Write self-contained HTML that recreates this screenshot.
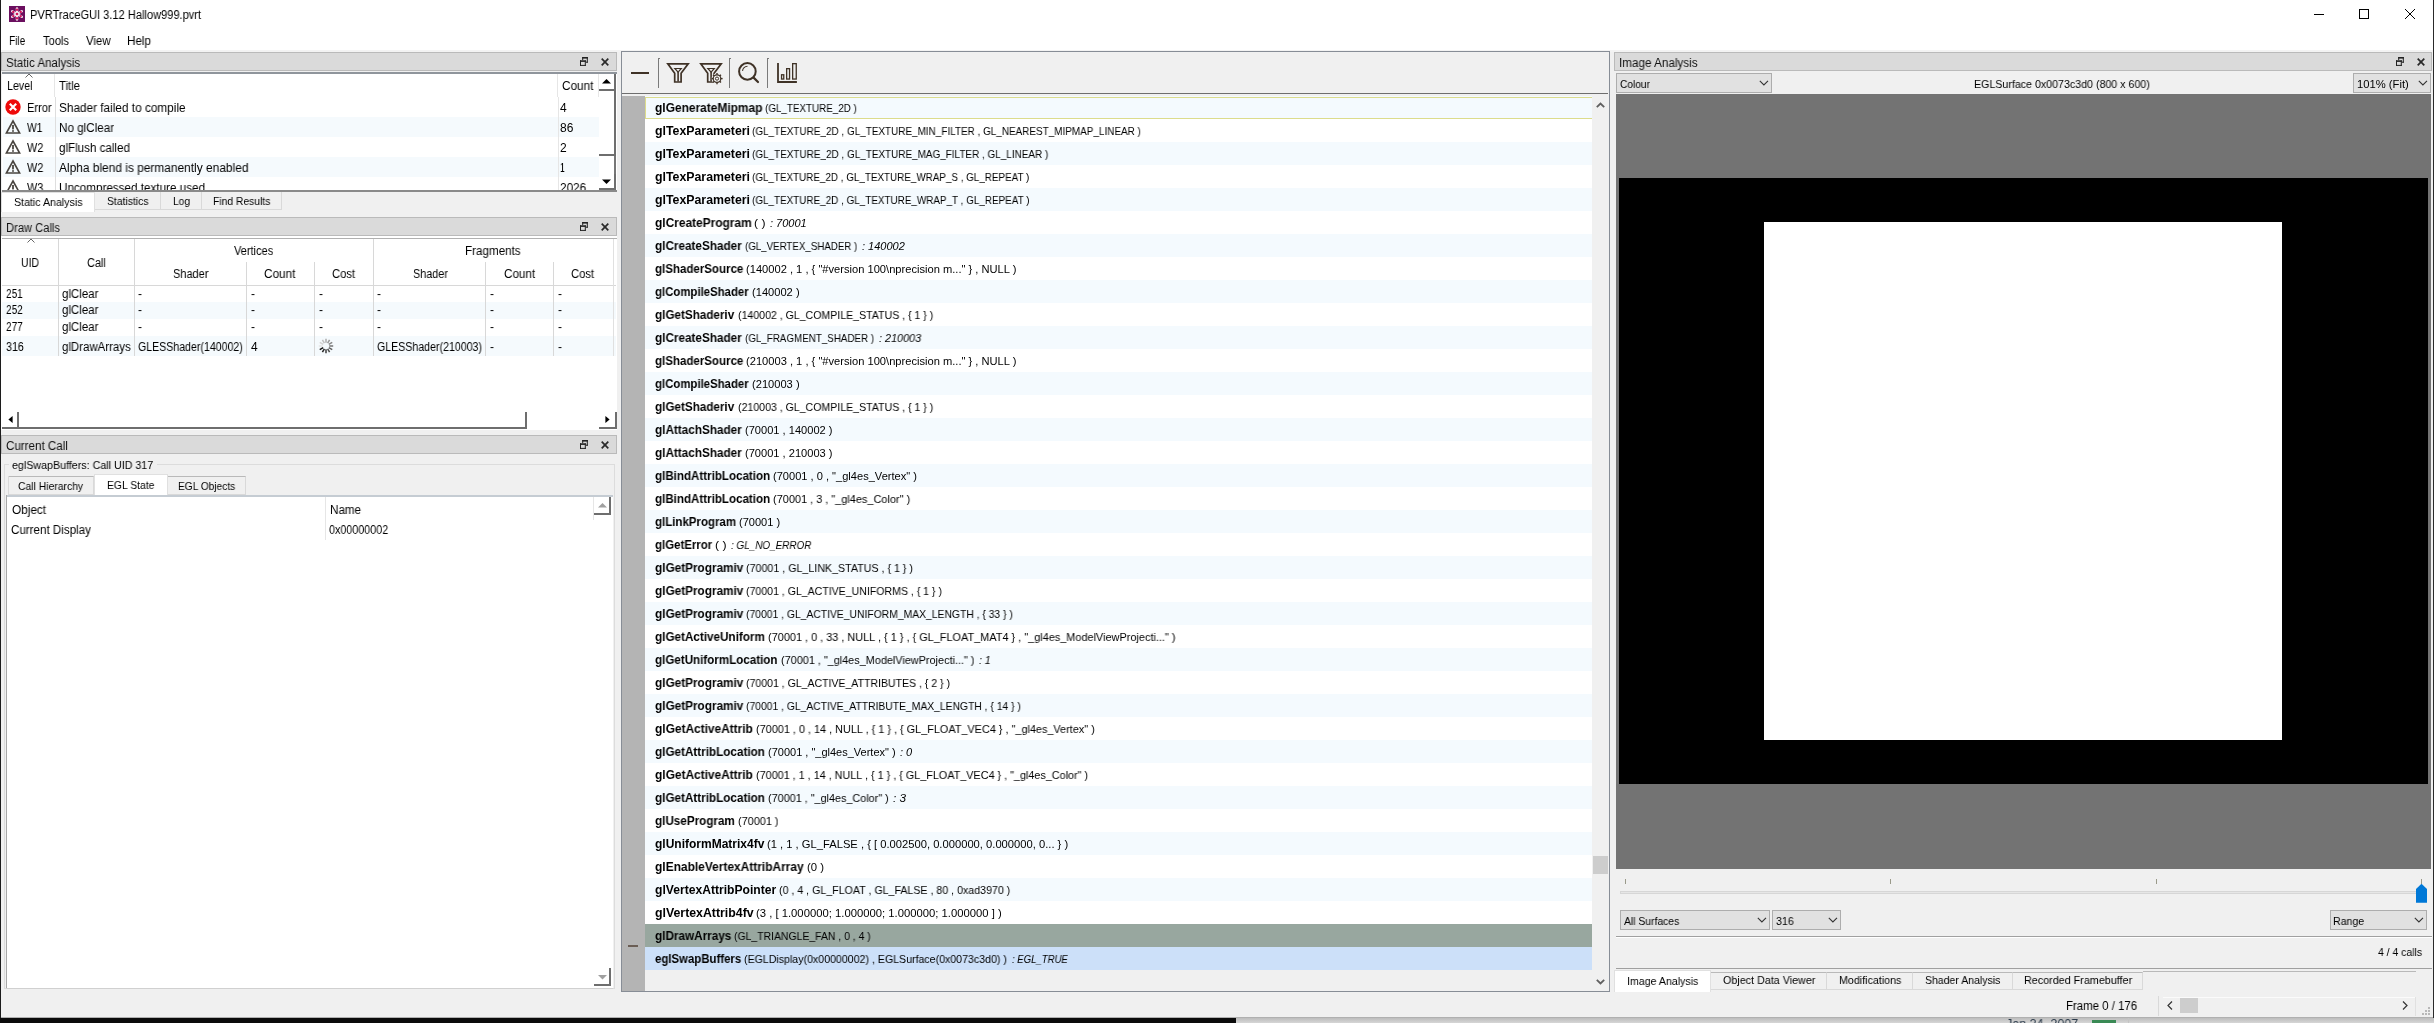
<!DOCTYPE html><html><head><meta charset="utf-8"><style>html,body{margin:0;padding:0;width:2434px;height:1023px;overflow:hidden;background:#f0f0f0}.a{position:absolute}.t{position:absolute;white-space:nowrap;line-height:1;font-family:"Liberation Sans",sans-serif;transform-origin:0 0;will-change:transform}</style></head><body>
<div class="a" style="left:0px;top:0px;width:2434px;height:1023px;background:#f0f0f0"></div>
<div class="a" style="left:1px;top:0px;width:2432px;height:50px;background:#fff"></div>
<div class="a" style="left:1px;top:50px;width:2432px;height:2px;background:#f3f3f3"></div>
<div class="a" style="left:0px;top:0px;width:1px;height:1018px;background:#1c1c1c"></div>
<div class="a" style="left:2433px;top:0px;width:1px;height:1018px;background:#2a2a2a"></div>
<div class="a" style="left:0px;top:1018px;width:1236px;height:5px;background:#0b0b0b"></div>
<div class="a" style="left:1236px;top:1018px;width:1198px;height:5px;background:linear-gradient(#bdbdbd,#d6d6d6)"></div>
<div class="a" style="left:0;top:0;width:2434px;height:1023px;clip-path:inset(1018px 0px 0px 1236px)">
<div class="t" style="left:2006.00px;top:1016.50px;font-size:13px;color:#2b3a4a;transform:scaleX(0.9600);">Jan 24, 2007</div>
<div class="a" style="left:2092px;top:1020px;width:24px;height:3px;background:#3a8a55"></div>
<div class="a" style="left:2128px;top:1018px;width:1px;height:5px;background:#c4c4c4"></div>
</div>
<svg class="a" style="left:9px;top:6px" width="16" height="16" viewBox="0 0 16 16"><rect width="16" height="16" fill="#6b0f5f"/><g stroke="#f3e8f0" stroke-width="2.4" stroke-linecap="round"><line x1="8" y1="2.5" x2="8" y2="13.5"/><line x1="3.2" y1="5.2" x2="12.8" y2="10.8"/><line x1="3.2" y1="10.8" x2="12.8" y2="5.2"/></g><g fill="#d4145a"><circle cx="8" cy="3.8" r="1.2"/><circle cx="8" cy="12.2" r="1.2"/><circle cx="4.3" cy="5.9" r="1.2"/><circle cx="11.7" cy="10.1" r="1.2"/><circle cx="4.3" cy="10.1" r="1.2"/><circle cx="11.7" cy="5.9" r="1.2"/><circle cx="8" cy="8" r="1.3"/></g></svg>
<div class="t" style="left:30.30px;top:8.84px;font-size:12px;color:#000;transform:scaleX(0.9226);">PVRTraceGUI 3.12 Hallow999.pvrt</div>
<div class="a" style="left:2314px;top:14px;width:10px;height:1px;background:#000"></div>
<div class="a" style="left:2359px;top:9px;width:10px;height:10px;border:1px solid #000;box-sizing:border-box"></div>
<svg class="a" style="left:2404px;top:8px" width="12" height="12" viewBox="0 0 12 12"><path d="M1 1L11 11M11 1L1 11" stroke="#000" stroke-width="1"/></svg>
<div class="t" style="left:9.40px;top:34.84px;font-size:12px;color:#000;transform:scaleX(0.8400);">File</div>
<div class="t" style="left:43.30px;top:34.84px;font-size:12px;color:#000;transform:scaleX(0.9286);">Tools</div>
<div class="t" style="left:86.10px;top:34.84px;font-size:12px;color:#000;transform:scaleX(0.9500);">View</div>
<div class="t" style="left:127.40px;top:34.84px;font-size:12px;color:#000;transform:scaleX(0.9680);">Help</div>
<div class="a" style="left:1px;top:52px;width:616px;height:19px;background:#dadada;border:1px solid #bababa;box-sizing:border-box"></div>
<div class="t" style="left:6.00px;top:56.84px;font-size:12px;color:#111;transform:scaleX(0.9597);">Static Analysis</div>
<svg class="a" style="left:580px;top:57px" width="9" height="9" viewBox="0 0 9 9"><g fill="#222"><rect x="2.2" y="0" width="5.6" height="1.6"/><rect x="6.8" y="0" width="1" height="5.7"/><rect x="2.2" y="0" width="1" height="3.3"/><rect x="5.8" y="4.7" width="2" height="1"/><rect x="0" y="3.3" width="5.8" height="1.6"/><rect x="0" y="3.3" width="1" height="5.6"/><rect x="4.8" y="3.3" width="1" height="5.6"/><rect x="0" y="7.9" width="5.8" height="1"/></g></svg>
<svg class="a" style="left:601px;top:58px" width="8" height="8" viewBox="0 0 8 8"><path d="M0.7 0.7L7.3 7.3M7.3 0.7L0.7 7.3" stroke="#2a2a2a" stroke-width="1.7"/></svg>
<div class="a" style="left:1px;top:217px;width:616px;height:19px;background:#dadada;border:1px solid #bababa;box-sizing:border-box"></div>
<div class="t" style="left:6.00px;top:221.84px;font-size:12px;color:#111;transform:scaleX(0.9310);">Draw Calls</div>
<svg class="a" style="left:580px;top:222px" width="9" height="9" viewBox="0 0 9 9"><g fill="#222"><rect x="2.2" y="0" width="5.6" height="1.6"/><rect x="6.8" y="0" width="1" height="5.7"/><rect x="2.2" y="0" width="1" height="3.3"/><rect x="5.8" y="4.7" width="2" height="1"/><rect x="0" y="3.3" width="5.8" height="1.6"/><rect x="0" y="3.3" width="1" height="5.6"/><rect x="4.8" y="3.3" width="1" height="5.6"/><rect x="0" y="7.9" width="5.8" height="1"/></g></svg>
<svg class="a" style="left:601px;top:223px" width="8" height="8" viewBox="0 0 8 8"><path d="M0.7 0.7L7.3 7.3M7.3 0.7L0.7 7.3" stroke="#2a2a2a" stroke-width="1.7"/></svg>
<div class="a" style="left:1px;top:435px;width:616px;height:19px;background:#dadada;border:1px solid #bababa;box-sizing:border-box"></div>
<div class="t" style="left:6.00px;top:439.84px;font-size:12px;color:#111;transform:scaleX(0.9672);">Current Call</div>
<svg class="a" style="left:580px;top:440px" width="9" height="9" viewBox="0 0 9 9"><g fill="#222"><rect x="2.2" y="0" width="5.6" height="1.6"/><rect x="6.8" y="0" width="1" height="5.7"/><rect x="2.2" y="0" width="1" height="3.3"/><rect x="5.8" y="4.7" width="2" height="1"/><rect x="0" y="3.3" width="5.8" height="1.6"/><rect x="0" y="3.3" width="1" height="5.6"/><rect x="4.8" y="3.3" width="1" height="5.6"/><rect x="0" y="7.9" width="5.8" height="1"/></g></svg>
<svg class="a" style="left:601px;top:441px" width="8" height="8" viewBox="0 0 8 8"><path d="M0.7 0.7L7.3 7.3M7.3 0.7L0.7 7.3" stroke="#2a2a2a" stroke-width="1.7"/></svg>
<div class="a" style="left:1614px;top:52px;width:818px;height:19px;background:#dadada;border:1px solid #bababa;box-sizing:border-box"></div>
<div class="t" style="left:1619.00px;top:56.84px;font-size:12px;color:#111;transform:scaleX(0.9741);">Image Analysis</div>
<svg class="a" style="left:2396px;top:57px" width="9" height="9" viewBox="0 0 9 9"><g fill="#222"><rect x="2.2" y="0" width="5.6" height="1.6"/><rect x="6.8" y="0" width="1" height="5.7"/><rect x="2.2" y="0" width="1" height="3.3"/><rect x="5.8" y="4.7" width="2" height="1"/><rect x="0" y="3.3" width="5.8" height="1.6"/><rect x="0" y="3.3" width="1" height="5.6"/><rect x="4.8" y="3.3" width="1" height="5.6"/><rect x="0" y="7.9" width="5.8" height="1"/></g></svg>
<svg class="a" style="left:2417px;top:58px" width="8" height="8" viewBox="0 0 8 8"><path d="M0.7 0.7L7.3 7.3M7.3 0.7L0.7 7.3" stroke="#2a2a2a" stroke-width="1.7"/></svg>
<div class="a" style="left:2px;top:72px;width:615px;height:120px;background:#fff"></div>
<div class="a" style="left:2px;top:72px;width:615px;height:2px;background:#8f959c"></div>
<div class="a" style="left:2px;top:190px;width:615px;height:2px;background:#8a8a8a"></div>
<div class="a" style="left:0;top:0;width:2434px;height:1023px;clip-path:inset(74px 1835px 833px 2px)">
<div class="a" style="left:54px;top:74px;width:1px;height:23px;background:#e6e6e6"></div>
<div class="a" style="left:557px;top:74px;width:1px;height:23px;background:#e6e6e6"></div>
<svg class="a" style="left:25px;top:73px" width="8" height="5" viewBox="0 0 8 5"><path d="M0.5 4.5L4 1L7.5 4.5" stroke="#666" fill="none"/></svg>
<div class="t" style="left:6.60px;top:79.84px;font-size:12px;color:#000;transform:scaleX(0.8931);">Level</div>
<div class="t" style="left:58.70px;top:79.84px;font-size:12px;color:#000;transform:scaleX(0.9435);">Title</div>
<div class="t" style="left:562.40px;top:79.84px;font-size:12px;color:#000;transform:scaleX(0.9788);">Count</div>
<svg class="a" style="left:5px;top:99px" width="16" height="16" viewBox="0 0 16 16"><circle cx="8" cy="8" r="7.7" fill="#ee0a0a"/><path d="M4.8 4.8L11.2 11.2M11.2 4.8L4.8 11.2" stroke="#fff" stroke-width="2.2"/></svg>
<div class="t" style="left:27.10px;top:101.84px;font-size:12px;color:#000;transform:scaleX(0.9222);">Error</div>
<div class="t" style="left:58.60px;top:101.84px;font-size:12px;color:#000;transform:scaleX(0.9829);">Shader failed to compile</div>
<div class="t" style="left:560.40px;top:101.84px;font-size:12px;color:#000;transform:scaleX(0.9286);">4</div>
<div class="a" style="left:3px;top:117px;width:596px;height:20px;background:#f5fafd"></div>
<svg class="a" style="left:5px;top:119px" width="16" height="16" viewBox="0 0 16 16"><path d="M8 2L14.6 14H1.4Z" fill="none" stroke="#4a4540" stroke-width="1.6"/><rect x="7.1" y="6" width="1.8" height="4.4" fill="#4a4540"/><rect x="7.1" y="11.2" width="1.8" height="1.6" fill="#4a4540"/></svg>
<div class="t" style="left:27.10px;top:121.84px;font-size:12px;color:#000;transform:scaleX(0.8556);">W1</div>
<div class="t" style="left:58.60px;top:121.84px;font-size:12px;color:#000;transform:scaleX(0.9719);">No glClear</div>
<div class="t" style="left:560.40px;top:121.84px;font-size:12px;color:#000;transform:scaleX(0.9643);">86</div>
<svg class="a" style="left:5px;top:139px" width="16" height="16" viewBox="0 0 16 16"><path d="M8 2L14.6 14H1.4Z" fill="none" stroke="#4a4540" stroke-width="1.6"/><rect x="7.1" y="6" width="1.8" height="4.4" fill="#4a4540"/><rect x="7.1" y="11.2" width="1.8" height="1.6" fill="#4a4540"/></svg>
<div class="t" style="left:27.10px;top:141.84px;font-size:12px;color:#000;transform:scaleX(0.9111);">W2</div>
<div class="t" style="left:58.60px;top:141.84px;font-size:12px;color:#000;transform:scaleX(0.9671);">glFlush called</div>
<div class="t" style="left:560.40px;top:141.84px;font-size:12px;color:#000;transform:scaleX(0.9286);">2</div>
<div class="a" style="left:3px;top:157px;width:596px;height:20px;background:#f5fafd"></div>
<svg class="a" style="left:5px;top:159px" width="16" height="16" viewBox="0 0 16 16"><path d="M8 2L14.6 14H1.4Z" fill="none" stroke="#4a4540" stroke-width="1.6"/><rect x="7.1" y="6" width="1.8" height="4.4" fill="#4a4540"/><rect x="7.1" y="11.2" width="1.8" height="1.6" fill="#4a4540"/></svg>
<div class="t" style="left:27.10px;top:161.84px;font-size:12px;color:#000;transform:scaleX(0.9111);">W2</div>
<div class="t" style="left:58.60px;top:161.84px;font-size:12px;color:#000;transform:scaleX(0.9927);">Alpha blend is permanently enabled</div>
<div class="t" style="left:560.40px;top:161.84px;font-size:12px;color:#000;transform:scaleX(0.7143);">1</div>
<svg class="a" style="left:5px;top:179px" width="16" height="16" viewBox="0 0 16 16"><path d="M8 2L14.6 14H1.4Z" fill="none" stroke="#4a4540" stroke-width="1.6"/><rect x="7.1" y="6" width="1.8" height="4.4" fill="#4a4540"/><rect x="7.1" y="11.2" width="1.8" height="1.6" fill="#4a4540"/></svg>
<div class="t" style="left:27.10px;top:181.84px;font-size:12px;color:#000;transform:scaleX(0.9111);">W3</div>
<div class="t" style="left:58.60px;top:181.84px;font-size:12px;color:#000;transform:scaleX(0.9733);">Uncompressed texture used</div>
<div class="t" style="left:560.40px;top:181.84px;font-size:12px;color:#000;transform:scaleX(0.9815);">2026</div>
<div class="a" style="left:55px;top:97px;width:1px;height:20px;background:#dedede"></div>
<div class="a" style="left:558px;top:97px;width:1px;height:20px;background:#e6e6e6"></div>
<div class="a" style="left:55px;top:117px;width:1px;height:20px;background:#dedede"></div>
<div class="a" style="left:558px;top:117px;width:1px;height:20px;background:#e6e6e6"></div>
<div class="a" style="left:55px;top:137px;width:1px;height:20px;background:#dedede"></div>
<div class="a" style="left:558px;top:137px;width:1px;height:20px;background:#e6e6e6"></div>
<div class="a" style="left:55px;top:157px;width:1px;height:20px;background:#dedede"></div>
<div class="a" style="left:558px;top:157px;width:1px;height:20px;background:#e6e6e6"></div>
<div class="a" style="left:55px;top:177px;width:1px;height:20px;background:#dedede"></div>
<div class="a" style="left:558px;top:177px;width:1px;height:20px;background:#e6e6e6"></div>
<div class="a" style="left:598px;top:74px;width:1px;height:23px;background:#e6e6e6"></div>
</div>
<div class="a" style="left:599px;top:74px;width:17px;height:116px;background:#fff;border-right:2px solid #767676;box-sizing:border-box"></div>
<div class="a" style="left:599px;top:74px;width:17px;height:17px;background:#fff;border-right:2px solid #6e6e6e;border-bottom:2px solid #6e6e6e;box-sizing:border-box"></div>
<svg class="a" style="left:602px;top:78px" width="9" height="6" viewBox="0 0 9 6"><path d="M0 5.5L4.5 1L9 5.5Z" fill="#000"/></svg>
<div class="a" style="left:599px;top:91px;width:17px;height:65px;background:#fff;border-right:2px solid #6e6e6e;border-bottom:2px solid #6e6e6e;box-sizing:border-box"></div>
<div class="a" style="left:599px;top:174px;width:17px;height:16px;background:#fff;border-right:2px solid #6e6e6e;border-bottom:2px solid #6e6e6e;box-sizing:border-box"></div>
<svg class="a" style="left:602px;top:179px" width="9" height="6" viewBox="0 0 9 6"><path d="M0 0.5L4.5 5L9 0.5Z" fill="#000"/></svg>
<div class="a" style="left:1px;top:192px;width:94px;height:20px;background:#fff;border:1px solid #e0e0e0;border-bottom:none;box-sizing:border-box"></div>
<div class="t" style="left:13.70px;top:196.69px;font-size:11px;color:#000;transform:scaleX(0.9662);">Static Analysis</div>
<div class="a" style="left:95px;top:192px;width:66px;height:18px;background:#f0f0f0;border-right:1px solid #d9d9d9;border-bottom:1px solid #d9d9d9;box-sizing:border-box"></div>
<div class="t" style="left:106.75px;top:195.69px;font-size:11px;color:#000;transform:scaleX(0.9444);">Statistics</div>
<div class="a" style="left:161px;top:192px;width:41px;height:18px;background:#f0f0f0;border-right:1px solid #d9d9d9;border-bottom:1px solid #d9d9d9;box-sizing:border-box"></div>
<div class="t" style="left:173.10px;top:195.69px;font-size:11px;color:#000;transform:scaleX(0.9333);">Log</div>
<div class="a" style="left:202px;top:192px;width:80px;height:18px;background:#f0f0f0;border-right:1px solid #d9d9d9;border-bottom:1px solid #d9d9d9;box-sizing:border-box"></div>
<div class="t" style="left:212.95px;top:195.69px;font-size:11px;color:#000;transform:scaleX(0.9371);">Find Results</div>
<div class="a" style="left:1px;top:236px;width:616px;height:194px;background:#fff"></div>
<div class="a" style="left:2px;top:238px;width:615px;height:1px;background:#b0b0b0"></div>
<div class="a" style="left:0;top:0;width:2434px;height:1023px;clip-path:inset(239px 1817px 611px 2px)">
<div class="a" style="left:2px;top:302px;width:614px;height:17px;background:#f5fafd"></div>
<div class="a" style="left:2px;top:336px;width:614px;height:20px;background:#f5fafd"></div>
<div class="a" style="left:58px;top:239px;width:1px;height:117px;background:#d8d8d8"></div>
<div class="a" style="left:134px;top:239px;width:1px;height:117px;background:#d8d8d8"></div>
<div class="a" style="left:373px;top:239px;width:1px;height:117px;background:#d8d8d8"></div>
<div class="a" style="left:246px;top:262px;width:1px;height:94px;background:#d8d8d8"></div>
<div class="a" style="left:314px;top:262px;width:1px;height:94px;background:#d8d8d8"></div>
<div class="a" style="left:485px;top:262px;width:1px;height:94px;background:#d8d8d8"></div>
<div class="a" style="left:553px;top:262px;width:1px;height:94px;background:#d8d8d8"></div>
<div class="a" style="left:2px;top:285px;width:614px;height:1px;background:#d8d8d8"></div>
<svg class="a" style="left:26.5px;top:238px" width="8" height="5" viewBox="0 0 8 5"><path d="M0.5 4.5L4 1L7.5 4.5" stroke="#666" fill="none"/></svg>
<div class="t" style="left:21.10px;top:256.84px;font-size:12px;color:#000;transform:scaleX(0.8714);">UID</div>
<div class="t" style="left:87.40px;top:256.84px;font-size:12px;color:#000;transform:scaleX(0.9095);">Call</div>
<div class="t" style="left:233.80px;top:244.84px;font-size:12px;color:#000;transform:scaleX(0.9186);">Vertices</div>
<div class="t" style="left:464.90px;top:244.84px;font-size:12px;color:#000;transform:scaleX(0.9702);">Fragments</div>
<div class="t" style="left:173.20px;top:267.84px;font-size:12px;color:#000;transform:scaleX(0.9154);">Shader</div>
<div class="t" style="left:264.40px;top:267.84px;font-size:12px;color:#000;transform:scaleX(0.9788);">Count</div>
<div class="t" style="left:332.40px;top:267.84px;font-size:12px;color:#000;transform:scaleX(0.9360);">Cost</div>
<div class="t" style="left:412.60px;top:267.84px;font-size:12px;color:#000;transform:scaleX(0.9026);">Shader</div>
<div class="t" style="left:503.60px;top:267.84px;font-size:12px;color:#000;transform:scaleX(0.9727);">Count</div>
<div class="t" style="left:571.30px;top:267.84px;font-size:12px;color:#000;transform:scaleX(0.9360);">Cost</div>
<div class="t" style="left:5.60px;top:287.84px;font-size:12px;color:#000;transform:scaleX(0.8400);">251</div>
<div class="t" style="left:62.40px;top:287.84px;font-size:12px;color:#000;transform:scaleX(0.9579);">glClear</div>
<div class="t" style="left:138.30px;top:287.84px;font-size:12px;color:#000;">-</div>
<div class="t" style="left:250.60px;top:287.84px;font-size:12px;color:#000;">-</div>
<div class="t" style="left:318.90px;top:287.84px;font-size:12px;color:#000;">-</div>
<div class="t" style="left:377.30px;top:287.84px;font-size:12px;color:#000;">-</div>
<div class="t" style="left:489.60px;top:287.84px;font-size:12px;color:#000;">-</div>
<div class="t" style="left:557.80px;top:287.84px;font-size:12px;color:#000;">-</div>
<div class="t" style="left:5.60px;top:303.84px;font-size:12px;color:#000;transform:scaleX(0.8400);">252</div>
<div class="t" style="left:62.40px;top:303.84px;font-size:12px;color:#000;transform:scaleX(0.9579);">glClear</div>
<div class="t" style="left:138.30px;top:303.84px;font-size:12px;color:#000;">-</div>
<div class="t" style="left:250.60px;top:303.84px;font-size:12px;color:#000;">-</div>
<div class="t" style="left:318.90px;top:303.84px;font-size:12px;color:#000;">-</div>
<div class="t" style="left:377.30px;top:303.84px;font-size:12px;color:#000;">-</div>
<div class="t" style="left:489.60px;top:303.84px;font-size:12px;color:#000;">-</div>
<div class="t" style="left:557.80px;top:303.84px;font-size:12px;color:#000;">-</div>
<div class="t" style="left:5.60px;top:320.84px;font-size:12px;color:#000;transform:scaleX(0.8400);">277</div>
<div class="t" style="left:62.40px;top:320.84px;font-size:12px;color:#000;transform:scaleX(0.9579);">glClear</div>
<div class="t" style="left:138.30px;top:320.84px;font-size:12px;color:#000;">-</div>
<div class="t" style="left:250.60px;top:320.84px;font-size:12px;color:#000;">-</div>
<div class="t" style="left:318.90px;top:320.84px;font-size:12px;color:#000;">-</div>
<div class="t" style="left:377.30px;top:320.84px;font-size:12px;color:#000;">-</div>
<div class="t" style="left:489.60px;top:320.84px;font-size:12px;color:#000;">-</div>
<div class="t" style="left:557.80px;top:320.84px;font-size:12px;color:#000;">-</div>
<div class="t" style="left:5.60px;top:340.84px;font-size:12px;color:#000;transform:scaleX(0.8900);">316</div>
<div class="t" style="left:62.40px;top:340.84px;font-size:12px;color:#000;transform:scaleX(0.9556);">glDrawArrays</div>
<div class="t" style="left:138.30px;top:340.84px;font-size:12px;color:#000;transform:scaleX(0.8824);">GLESShader(140002)</div>
<div class="t" style="left:250.60px;top:340.84px;font-size:12px;color:#000;transform:scaleX(0.9286);">4</div>
<div class="t" style="left:377.30px;top:340.84px;font-size:12px;color:#000;transform:scaleX(0.8840);">GLESShader(210003)</div>
<div class="t" style="left:489.60px;top:340.84px;font-size:12px;color:#000;">-</div>
<div class="t" style="left:557.80px;top:340.84px;font-size:12px;color:#000;">-</div>
<svg class="a" style="left:317px;top:337px" width="18" height="18" viewBox="0 0 18 18"><line x1="6.23" y1="10.60" x2="2.76" y2="12.60" stroke="#141414" stroke-width="1.5"/><line x1="7.40" y1="11.77" x2="5.40" y2="15.24" stroke="#272727" stroke-width="1.5"/><line x1="9.00" y1="12.20" x2="9.00" y2="16.20" stroke="#3a3a3a" stroke-width="1.5"/><line x1="10.60" y1="11.77" x2="12.60" y2="15.24" stroke="#4d4d4d" stroke-width="1.5"/><line x1="11.77" y1="10.60" x2="15.24" y2="12.60" stroke="#606060" stroke-width="1.5"/><line x1="12.20" y1="9.00" x2="16.20" y2="9.00" stroke="#737373" stroke-width="1.5"/><line x1="11.77" y1="7.40" x2="15.24" y2="5.40" stroke="#868686" stroke-width="1.5"/><line x1="10.60" y1="6.23" x2="12.60" y2="2.76" stroke="#999999" stroke-width="1.5"/><line x1="9.00" y1="5.80" x2="9.00" y2="1.80" stroke="#acacac" stroke-width="1.5"/><line x1="7.40" y1="6.23" x2="5.40" y2="2.76" stroke="#bfbfbf" stroke-width="1.5"/><line x1="6.23" y1="7.40" x2="2.76" y2="5.40" stroke="#d2d2d2" stroke-width="1.5"/><line x1="5.80" y1="9.00" x2="1.80" y2="9.00" stroke="#e5e5e5" stroke-width="1.5"/></svg>
</div>
<div class="a" style="left:2px;top:412px;width:615px;height:17px;background:#fff"></div>
<div class="a" style="left:2px;top:412px;width:17px;height:17px;background:#fff;border-right:2px solid #6e6e6e;border-bottom:2px solid #6e6e6e;box-sizing:border-box"></div>
<svg class="a" style="left:7.5px;top:416px" width="5" height="7" viewBox="0 0 5 7"><path d="M4.6 0L0.4 3.5L4.6 7Z" fill="#000"/></svg>
<div class="a" style="left:19px;top:412px;width:508px;height:17px;background:#fff;border-right:2px solid #6e6e6e;border-bottom:2px solid #6e6e6e;box-sizing:border-box"></div>
<div class="a" style="left:599px;top:412px;width:18px;height:17px;background:#fff;border-right:2px solid #6e6e6e;border-bottom:2px solid #6e6e6e;box-sizing:border-box"></div>
<svg class="a" style="left:604.5px;top:416px" width="5" height="7" viewBox="0 0 5 7"><path d="M0.4 0L4.6 3.5L0.4 7Z" fill="#000"/></svg>
<div class="a" style="left:613px;top:239px;width:1px;height:117px;background:#e0e0e0"></div>
<div class="a" style="left:4px;top:464px;width:611px;height:525px;border:1px solid #dcdcdc;box-sizing:border-box"></div>
<div class="a" style="left:9px;top:458px;width:148px;height:12px;background:#f0f0f0"></div>
<div class="t" style="left:11.50px;top:459.69px;font-size:11px;color:#000;transform:scaleX(0.9717);">eglSwapBuffers: Call UID 317</div>
<div class="a" style="left:8px;top:476px;width:86px;height:19px;background:#f0f0f0;border-top:1px solid #b9b9b9;border-right:1px solid #d9d9d9;border-bottom:1px solid #d9d9d9;box-sizing:border-box"></div>
<div class="t" style="left:18.00px;top:480.69px;font-size:11px;color:#000;transform:scaleX(0.9429);">Call Hierarchy</div>
<div class="a" style="left:8px;top:476px;width:1px;height:19px;background:#d9d9d9"></div>
<div class="a" style="left:94px;top:474px;width:74px;height:21px;background:#fff;border:1px solid #e0e0e0;border-bottom:none;box-sizing:border-box"></div>
<div class="t" style="left:107.45px;top:480.19px;font-size:11px;color:#000;transform:scaleX(0.9420);">EGL State</div>
<div class="a" style="left:168px;top:476px;width:78px;height:19px;background:#f0f0f0;border-top:1px solid #b9b9b9;border-right:1px solid #d9d9d9;border-bottom:1px solid #d9d9d9;box-sizing:border-box"></div>
<div class="t" style="left:177.95px;top:480.69px;font-size:11px;color:#000;transform:scaleX(0.9222);">EGL Objects</div>
<div class="a" style="left:6px;top:495px;width:607px;height:494px;background:#fff"></div>
<div class="a" style="left:6px;top:495px;width:607px;height:2px;background:#c5ccd3"></div>
<div class="a" style="left:6px;top:495px;width:1px;height:494px;background:#a8a8a8"></div>
<div class="a" style="left:6px;top:988px;width:607px;height:1px;background:#d0d0d0"></div>
<div class="a" style="left:325px;top:497px;width:1px;height:23px;background:#e6e6e6"></div>
<div class="a" style="left:325px;top:520px;width:1px;height:20px;background:#e6e6e6"></div>
<div class="a" style="left:593px;top:497px;width:1px;height:23px;background:#e6e6e6"></div>
<div class="t" style="left:11.50px;top:503.84px;font-size:12px;color:#000;transform:scaleX(0.9829);">Object</div>
<div class="t" style="left:330.10px;top:503.84px;font-size:12px;color:#000;transform:scaleX(0.9719);">Name</div>
<div class="t" style="left:10.70px;top:523.84px;font-size:12px;color:#000;transform:scaleX(0.9663);">Current Display</div>
<div class="t" style="left:329.30px;top:523.84px;font-size:12px;color:#000;transform:scaleX(0.8955);">0x00000002</div>
<div class="a" style="left:594px;top:497px;width:17px;height:18px;background:#fff;border-right:2px solid #6e6e6e;border-bottom:2px solid #6e6e6e;box-sizing:border-box"></div>
<svg class="a" style="left:598px;top:503px" width="9" height="5" viewBox="0 0 9 5"><path d="M0 4.5L4.5 0L9 4.5Z" fill="#a0a0a0"/></svg>
<div class="a" style="left:594px;top:968px;width:17px;height:18px;background:#fff;border-right:2px solid #6e6e6e;border-bottom:2px solid #6e6e6e;box-sizing:border-box"></div>
<svg class="a" style="left:598px;top:975px" width="9" height="5" viewBox="0 0 9 5"><path d="M0 0L4.5 4.5L9 0Z" fill="#a0a0a0"/></svg>
<div class="a" style="left:621px;top:51px;width:989px;height:941px;background:#f0f0f0;border:1px solid #878d96;box-sizing:border-box"></div>
<div class="a" style="left:622px;top:93px;width:986px;height:1px;background:#6e6e6e"></div>
<div class="a" style="left:622px;top:94px;width:986px;height:2px;background:#f0f0f0"></div>
<div class="a" style="left:631px;top:72px;width:18px;height:2px;background:#3f3226"></div>
<div class="a" style="left:658px;top:58px;width:1px;height:30px;background:#7a7a7a"></div>
<div class="a" style="left:658px;top:58px;width:2px;height:1px;background:#7a7a7a"></div>
<div class="a" style="left:729px;top:58px;width:1px;height:30px;background:#7a7a7a"></div>
<div class="a" style="left:729px;top:58px;width:2px;height:1px;background:#7a7a7a"></div>
<div class="a" style="left:767px;top:58px;width:1px;height:30px;background:#7a7a7a"></div>
<div class="a" style="left:767px;top:58px;width:2px;height:1px;background:#7a7a7a"></div>
<svg class="a" style="left:662px;top:58px" width="32" height="32" viewBox="0 0 32 32"><path d="M5.8 5.85H26.2L19.1 15.3V24H12.7V15.3Z" fill="none" stroke="#3f3226" stroke-width="1.7" stroke-linejoin="miter"/><path d="M12.8 10.5H19.3L16.1 14.2Z" fill="none" stroke="#3f3226" stroke-width="1.2"/><path d="M16.1 14V23.5" stroke="#3f3226" stroke-width="1.6"/></svg>
<svg class="a" style="left:695px;top:58px" width="32" height="32" viewBox="0 0 32 32"><path d="M5.8 5.85H26.2L19.1 15.3V24H12.7V15.3Z" fill="none" stroke="#3f3226" stroke-width="1.7" stroke-linejoin="miter"/><path d="M12.8 10.5H19.3L16.1 14.2Z" fill="none" stroke="#3f3226" stroke-width="1.2"/><path d="M16.1 14V23.5" stroke="#3f3226" stroke-width="1.6"/><circle cx="22" cy="20.6" r="5.4" fill="#f0f0f0"/><circle cx="22" cy="20.6" r="3.8" fill="#f4f4f4" stroke="#3f3226" stroke-width="1.2"/><line x1="25.80" y1="20.60" x2="27.60" y2="20.60" stroke="#3f3226" stroke-width="1.4"/><line x1="24.69" y1="23.29" x2="25.96" y2="24.56" stroke="#3f3226" stroke-width="1.4"/><line x1="22.00" y1="24.40" x2="22.00" y2="26.20" stroke="#3f3226" stroke-width="1.4"/><line x1="19.31" y1="23.29" x2="18.04" y2="24.56" stroke="#3f3226" stroke-width="1.4"/><line x1="18.20" y1="20.60" x2="16.40" y2="20.60" stroke="#3f3226" stroke-width="1.4"/><line x1="19.31" y1="17.91" x2="18.04" y2="16.64" stroke="#3f3226" stroke-width="1.4"/><line x1="22.00" y1="16.80" x2="22.00" y2="15.00" stroke="#3f3226" stroke-width="1.4"/><line x1="24.69" y1="17.91" x2="25.96" y2="16.64" stroke="#3f3226" stroke-width="1.4"/><circle cx="22" cy="20.6" r="1.6" fill="none" stroke="#3f3226" stroke-width="1"/></svg>
<svg class="a" style="left:732px;top:58px" width="34" height="32" viewBox="0 0 34 32"><circle cx="15.4" cy="13.4" r="8.3" fill="none" stroke="#3f3226" stroke-width="2"/><path d="M10.5 12.8A5.4 5.4 0 0 1 15.5 8.3" stroke="#3f3226" stroke-width="1.1" fill="none"/><path d="M21.6 19.6L26 24" stroke="#3f3226" stroke-width="2.2" stroke-linecap="round"/></svg>
<svg class="a" style="left:772px;top:58px" width="30" height="32" viewBox="0 0 30 32"><path d="M6 5V24H24.9" fill="none" stroke="#3f3226" stroke-width="1.8"/><rect x="9.55" y="16.75" width="2.2" height="4.3" fill="none" stroke="#3f3226" stroke-width="1.3"/><rect x="14.65" y="10.65" width="2.9" height="10.4" fill="none" stroke="#3f3226" stroke-width="1.3"/><rect x="20.65" y="5.65" width="3.6" height="15.4" fill="none" stroke="#3f3226" stroke-width="1.3"/></svg>
<div class="a" style="left:622px;top:96px;width:23px;height:895px;background:#b4b4b4"></div>
<div class="a" style="left:628px;top:945px;width:10px;height:2px;background:#6b5e55"></div>
<div class="a" style="left:0;top:0;width:2434px;height:1023px;clip-path:inset(96px 842px 32px 645px)">
<div class="a" style="left:645px;top:96px;width:947px;height:23px;background:#f4fafe"></div>
<div class="a" style="left:645px;top:97px;width:947px;height:22px;border:1px solid #dcdc8c;border-right:none;box-sizing:border-box"></div>
<div class="t" style="left:654.50px;top:101.84px;font-size:12px;font-weight:bold;color:#000;transform:scaleX(0.9944);">glGenerateMipmap</div>
<div class="t" style="left:765.10px;top:102.69px;font-size:11px;color:#000;transform:scaleX(0.8942);">(GL_TEXTURE_2D )</div>
<div class="a" style="left:645px;top:119px;width:947px;height:23px;background:#ffffff"></div>
<div class="t" style="left:654.50px;top:124.84px;font-size:12px;font-weight:bold;color:#000;transform:scaleX(1.0272);">glTexParameteri</div>
<div class="t" style="left:752.20px;top:125.69px;font-size:11px;color:#000;transform:scaleX(0.9028);">(GL_TEXTURE_2D , GL_TEXTURE_MIN_FILTER , GL_NEAREST_MIPMAP_LINEAR )</div>
<div class="a" style="left:645px;top:142px;width:947px;height:23px;background:#f4fafe"></div>
<div class="t" style="left:654.50px;top:147.84px;font-size:12px;font-weight:bold;color:#000;transform:scaleX(1.0272);">glTexParameteri</div>
<div class="t" style="left:752.20px;top:148.69px;font-size:11px;color:#000;transform:scaleX(0.9030);">(GL_TEXTURE_2D , GL_TEXTURE_MAG_FILTER , GL_LINEAR )</div>
<div class="a" style="left:645px;top:165px;width:947px;height:23px;background:#ffffff"></div>
<div class="t" style="left:654.50px;top:170.84px;font-size:12px;font-weight:bold;color:#000;transform:scaleX(1.0272);">glTexParameteri</div>
<div class="t" style="left:752.20px;top:171.69px;font-size:11px;color:#000;transform:scaleX(0.8961);">(GL_TEXTURE_2D , GL_TEXTURE_WRAP_S , GL_REPEAT )</div>
<div class="a" style="left:645px;top:188px;width:947px;height:23px;background:#f4fafe"></div>
<div class="t" style="left:654.50px;top:193.84px;font-size:12px;font-weight:bold;color:#000;transform:scaleX(1.0272);">glTexParameteri</div>
<div class="t" style="left:752.20px;top:194.69px;font-size:11px;color:#000;transform:scaleX(0.8990);">(GL_TEXTURE_2D , GL_TEXTURE_WRAP_T , GL_REPEAT )</div>
<div class="a" style="left:645px;top:211px;width:947px;height:23px;background:#ffffff"></div>
<div class="t" style="left:654.50px;top:216.84px;font-size:12px;font-weight:bold;color:#000;transform:scaleX(0.9928);">glCreateProgram</div>
<div class="t" style="left:754.00px;top:217.69px;font-size:11px;color:#000;transform:scaleX(1.1000);">( )</div>
<div class="t" style="left:769.50px;top:217.69px;font-size:11px;font-style:italic;color:#000;transform:scaleX(0.9865);">: 70001</div>
<div class="a" style="left:645px;top:234px;width:947px;height:23px;background:#f4fafe"></div>
<div class="t" style="left:654.50px;top:239.84px;font-size:12px;font-weight:bold;color:#000;transform:scaleX(0.9787);">glCreateShader</div>
<div class="t" style="left:744.80px;top:240.69px;font-size:11px;color:#000;transform:scaleX(0.8843);">(GL_VERTEX_SHADER )</div>
<div class="t" style="left:861.60px;top:240.69px;font-size:11px;font-style:italic;color:#000;">: 140002</div>
<div class="a" style="left:645px;top:257px;width:947px;height:23px;background:#ffffff"></div>
<div class="t" style="left:654.50px;top:262.84px;font-size:12px;font-weight:bold;color:#000;transform:scaleX(0.9598);">glShaderSource</div>
<div class="t" style="left:746.00px;top:263.69px;font-size:11px;color:#000;transform:scaleX(1.0116);">(140002 , 1 , { "#version 100\nprecision m..." } , NULL )</div>
<div class="a" style="left:645px;top:280px;width:947px;height:23px;background:#f4fafe"></div>
<div class="t" style="left:654.50px;top:285.84px;font-size:12px;font-weight:bold;color:#000;transform:scaleX(0.9495);">glCompileShader</div>
<div class="t" style="left:751.70px;top:286.69px;font-size:11px;color:#000;transform:scaleX(1.0106);">(140002 )</div>
<div class="a" style="left:645px;top:303px;width:947px;height:23px;background:#ffffff"></div>
<div class="t" style="left:654.50px;top:308.84px;font-size:12px;font-weight:bold;color:#000;transform:scaleX(0.9732);">glGetShaderiv</div>
<div class="t" style="left:737.50px;top:309.69px;font-size:11px;color:#000;transform:scaleX(0.9611);">(140002 , GL_COMPILE_STATUS , { 1 } )</div>
<div class="a" style="left:645px;top:326px;width:947px;height:23px;background:#f4fafe"></div>
<div class="t" style="left:654.50px;top:331.84px;font-size:12px;font-weight:bold;color:#000;transform:scaleX(0.9787);">glCreateShader</div>
<div class="t" style="left:744.80px;top:332.69px;font-size:11px;color:#000;transform:scaleX(0.8910);">(GL_FRAGMENT_SHADER )</div>
<div class="t" style="left:878.50px;top:332.69px;font-size:11px;font-style:italic;color:#000;transform:scaleX(0.9841);">: 210003</div>
<div class="a" style="left:645px;top:349px;width:947px;height:23px;background:#ffffff"></div>
<div class="t" style="left:654.50px;top:354.84px;font-size:12px;font-weight:bold;color:#000;transform:scaleX(0.9598);">glShaderSource</div>
<div class="t" style="left:746.00px;top:355.69px;font-size:11px;color:#000;transform:scaleX(1.0116);">(210003 , 1 , { "#version 100\nprecision m..." } , NULL )</div>
<div class="a" style="left:645px;top:372px;width:947px;height:23px;background:#f4fafe"></div>
<div class="t" style="left:654.50px;top:377.84px;font-size:12px;font-weight:bold;color:#000;transform:scaleX(0.9495);">glCompileShader</div>
<div class="t" style="left:751.70px;top:378.69px;font-size:11px;color:#000;transform:scaleX(1.0106);">(210003 )</div>
<div class="a" style="left:645px;top:395px;width:947px;height:23px;background:#ffffff"></div>
<div class="t" style="left:654.50px;top:400.84px;font-size:12px;font-weight:bold;color:#000;transform:scaleX(0.9732);">glGetShaderiv</div>
<div class="t" style="left:737.50px;top:401.69px;font-size:11px;color:#000;transform:scaleX(0.9611);">(210003 , GL_COMPILE_STATUS , { 1 } )</div>
<div class="a" style="left:645px;top:418px;width:947px;height:23px;background:#f4fafe"></div>
<div class="t" style="left:654.50px;top:423.84px;font-size:12px;font-weight:bold;color:#000;transform:scaleX(0.9787);">glAttachShader</div>
<div class="t" style="left:744.80px;top:424.69px;font-size:11px;color:#000;transform:scaleX(1.0080);">(70001 , 140002 )</div>
<div class="a" style="left:645px;top:441px;width:947px;height:23px;background:#ffffff"></div>
<div class="t" style="left:654.50px;top:446.84px;font-size:12px;font-weight:bold;color:#000;transform:scaleX(0.9787);">glAttachShader</div>
<div class="t" style="left:744.80px;top:447.69px;font-size:11px;color:#000;transform:scaleX(1.0080);">(70001 , 210003 )</div>
<div class="a" style="left:645px;top:464px;width:947px;height:23px;background:#f4fafe"></div>
<div class="t" style="left:654.50px;top:469.84px;font-size:12px;font-weight:bold;color:#000;transform:scaleX(0.9647);">glBindAttribLocation</div>
<div class="t" style="left:772.50px;top:470.69px;font-size:11px;color:#000;transform:scaleX(1.0070);">(70001 , 0 , "_gl4es_Vertex" )</div>
<div class="a" style="left:645px;top:487px;width:947px;height:23px;background:#ffffff"></div>
<div class="t" style="left:654.50px;top:492.84px;font-size:12px;font-weight:bold;color:#000;transform:scaleX(0.9647);">glBindAttribLocation</div>
<div class="t" style="left:772.50px;top:493.69px;font-size:11px;color:#000;transform:scaleX(0.9935);">(70001 , 3 , "_gl4es_Color" )</div>
<div class="a" style="left:645px;top:510px;width:947px;height:23px;background:#f4fafe"></div>
<div class="t" style="left:654.50px;top:515.84px;font-size:12px;font-weight:bold;color:#000;transform:scaleX(0.9576);">glLinkProgram</div>
<div class="t" style="left:739.10px;top:516.69px;font-size:11px;color:#000;transform:scaleX(1.0049);">(70001 )</div>
<div class="a" style="left:645px;top:533px;width:947px;height:23px;background:#ffffff"></div>
<div class="t" style="left:654.50px;top:538.84px;font-size:12px;font-weight:bold;color:#000;transform:scaleX(0.9533);">glGetError</div>
<div class="t" style="left:714.90px;top:539.69px;font-size:11px;color:#000;transform:scaleX(1.1100);">( )</div>
<div class="t" style="left:730.50px;top:539.69px;font-size:11px;font-style:italic;color:#000;transform:scaleX(0.9011);">: GL_NO_ERROR</div>
<div class="a" style="left:645px;top:556px;width:947px;height:23px;background:#f4fafe"></div>
<div class="t" style="left:654.50px;top:561.84px;font-size:12px;font-weight:bold;color:#000;transform:scaleX(0.9811);">glGetProgramiv</div>
<div class="t" style="left:746.00px;top:562.69px;font-size:11px;color:#000;transform:scaleX(0.9709);">(70001 , GL_LINK_STATUS , { 1 } )</div>
<div class="a" style="left:645px;top:579px;width:947px;height:23px;background:#ffffff"></div>
<div class="t" style="left:654.50px;top:584.84px;font-size:12px;font-weight:bold;color:#000;transform:scaleX(0.9811);">glGetProgramiv</div>
<div class="t" style="left:746.00px;top:585.69px;font-size:11px;color:#000;transform:scaleX(0.9598);">(70001 , GL_ACTIVE_UNIFORMS , { 1 } )</div>
<div class="a" style="left:645px;top:602px;width:947px;height:23px;background:#f4fafe"></div>
<div class="t" style="left:654.50px;top:607.84px;font-size:12px;font-weight:bold;color:#000;transform:scaleX(0.9811);">glGetProgramiv</div>
<div class="t" style="left:746.00px;top:608.69px;font-size:11px;color:#000;transform:scaleX(0.9408);">(70001 , GL_ACTIVE_UNIFORM_MAX_LENGTH , { 33 } )</div>
<div class="a" style="left:645px;top:625px;width:947px;height:23px;background:#ffffff"></div>
<div class="t" style="left:654.50px;top:630.84px;font-size:12px;font-weight:bold;color:#000;transform:scaleX(0.9752);">glGetActiveUniform</div>
<div class="t" style="left:767.90px;top:631.69px;font-size:11px;color:#000;transform:scaleX(0.9915);">(70001 , 0 , 33 , NULL , { 1 } , { GL_FLOAT_MAT4 } , "_gl4es_ModelViewProjecti..." )</div>
<div class="a" style="left:645px;top:648px;width:947px;height:23px;background:#f4fafe"></div>
<div class="t" style="left:654.50px;top:653.84px;font-size:12px;font-weight:bold;color:#000;transform:scaleX(0.9669);">glGetUniformLocation</div>
<div class="t" style="left:780.50px;top:654.69px;font-size:11px;color:#000;transform:scaleX(0.9872);">(70001 , "_gl4es_ModelViewProjecti..." )</div>
<div class="t" style="left:978.50px;top:654.69px;font-size:11px;font-style:italic;color:#000;transform:scaleX(0.9583);">: 1</div>
<div class="a" style="left:645px;top:671px;width:947px;height:23px;background:#ffffff"></div>
<div class="t" style="left:654.50px;top:676.84px;font-size:12px;font-weight:bold;color:#000;transform:scaleX(0.9811);">glGetProgramiv</div>
<div class="t" style="left:746.00px;top:677.69px;font-size:11px;color:#000;transform:scaleX(0.9573);">(70001 , GL_ACTIVE_ATTRIBUTES , { 2 } )</div>
<div class="a" style="left:645px;top:694px;width:947px;height:23px;background:#f4fafe"></div>
<div class="t" style="left:654.50px;top:699.84px;font-size:12px;font-weight:bold;color:#000;transform:scaleX(0.9811);">glGetProgramiv</div>
<div class="t" style="left:746.00px;top:700.69px;font-size:11px;color:#000;transform:scaleX(0.9392);">(70001 , GL_ACTIVE_ATTRIBUTE_MAX_LENGTH , { 14 } )</div>
<div class="a" style="left:645px;top:717px;width:947px;height:23px;background:#ffffff"></div>
<div class="t" style="left:654.50px;top:722.84px;font-size:12px;font-weight:bold;color:#000;transform:scaleX(0.9919);">glGetActiveAttrib</div>
<div class="t" style="left:755.90px;top:723.69px;font-size:11px;color:#000;transform:scaleX(0.9880);">(70001 , 0 , 14 , NULL , { 1 } , { GL_FLOAT_VEC4 } , "_gl4es_Vertex" )</div>
<div class="a" style="left:645px;top:740px;width:947px;height:23px;background:#f4fafe"></div>
<div class="t" style="left:654.50px;top:745.84px;font-size:12px;font-weight:bold;color:#000;transform:scaleX(0.9752);">glGetAttribLocation</div>
<div class="t" style="left:767.90px;top:746.69px;font-size:11px;color:#000;">(70001 , "_gl4es_Vertex" )</div>
<div class="t" style="left:900.30px;top:746.69px;font-size:11px;font-style:italic;color:#000;transform:scaleX(0.9769);">: 0</div>
<div class="a" style="left:645px;top:763px;width:947px;height:23px;background:#ffffff"></div>
<div class="t" style="left:654.50px;top:768.84px;font-size:12px;font-weight:bold;color:#000;transform:scaleX(0.9919);">glGetActiveAttrib</div>
<div class="t" style="left:755.90px;top:769.69px;font-size:11px;color:#000;transform:scaleX(0.9825);">(70001 , 1 , 14 , NULL , { 1 } , { GL_FLOAT_VEC4 } , "_gl4es_Color" )</div>
<div class="a" style="left:645px;top:786px;width:947px;height:23px;background:#f4fafe"></div>
<div class="t" style="left:654.50px;top:791.84px;font-size:12px;font-weight:bold;color:#000;transform:scaleX(0.9752);">glGetAttribLocation</div>
<div class="t" style="left:767.90px;top:792.69px;font-size:11px;color:#000;transform:scaleX(0.9837);">(70001 , "_gl4es_Color" )</div>
<div class="t" style="left:893.40px;top:792.69px;font-size:11px;font-style:italic;color:#000;transform:scaleX(1.0692);">: 3</div>
<div class="a" style="left:645px;top:809px;width:947px;height:23px;background:#ffffff"></div>
<div class="t" style="left:654.50px;top:814.84px;font-size:12px;font-weight:bold;color:#000;transform:scaleX(0.9732);">glUseProgram</div>
<div class="t" style="left:737.50px;top:815.69px;font-size:11px;color:#000;transform:scaleX(0.9878);">(70001 )</div>
<div class="a" style="left:645px;top:832px;width:947px;height:23px;background:#f4fafe"></div>
<div class="t" style="left:654.50px;top:837.84px;font-size:12px;font-weight:bold;color:#000;transform:scaleX(0.9955);">glUniformMatrix4fv</div>
<div class="t" style="left:767.20px;top:838.69px;font-size:11px;color:#000;transform:scaleX(1.0176);">(1 , 1 , GL_FALSE , { [ 0.002500, 0.000000, 0.000000, 0... } )</div>
<div class="a" style="left:645px;top:855px;width:947px;height:23px;background:#ffffff"></div>
<div class="t" style="left:654.50px;top:860.84px;font-size:12px;font-weight:bold;color:#000;transform:scaleX(0.9953);">glEnableVertexAttribArray</div>
<div class="t" style="left:807.00px;top:861.69px;font-size:11px;color:#000;transform:scaleX(1.0294);">(0 )</div>
<div class="a" style="left:645px;top:878px;width:947px;height:23px;background:#f4fafe"></div>
<div class="t" style="left:654.50px;top:883.84px;font-size:12px;font-weight:bold;color:#000;transform:scaleX(1.0100);">glVertexAttribPointer</div>
<div class="t" style="left:778.90px;top:884.69px;font-size:11px;color:#000;transform:scaleX(0.9667);">(0 , 4 , GL_FLOAT , GL_FALSE , 80 , 0xad3970 )</div>
<div class="a" style="left:645px;top:901px;width:947px;height:23px;background:#ffffff"></div>
<div class="t" style="left:654.50px;top:906.84px;font-size:12px;font-weight:bold;color:#000;transform:scaleX(1.0271);">glVertexAttrib4fv</div>
<div class="t" style="left:756.30px;top:907.69px;font-size:11px;color:#000;transform:scaleX(1.0250);">(3 , [ 1.000000; 1.000000; 1.000000; 1.000000 ] )</div>
<div class="a" style="left:645px;top:924px;width:947px;height:23px;background:#98a79f"></div>
<div class="t" style="left:654.50px;top:929.84px;font-size:12px;font-weight:bold;color:#000;transform:scaleX(0.9782);">glDrawArrays</div>
<div class="t" style="left:734.00px;top:930.69px;font-size:11px;color:#000;transform:scaleX(0.9479);">(GL_TRIANGLE_FAN , 0 , 4 )</div>
<div class="a" style="left:645px;top:947px;width:947px;height:23px;background:#cce0f9"></div>
<div class="t" style="left:654.50px;top:952.84px;font-size:12px;font-weight:bold;color:#000;transform:scaleX(0.9505);">eglSwapBuffers</div>
<div class="t" style="left:744.20px;top:953.69px;font-size:11px;color:#000;transform:scaleX(0.9641);">(EGLDisplay(0x00000002) , EGLSurface(0x0073c3d0) )</div>
<div class="t" style="left:1011.90px;top:953.69px;font-size:11px;font-style:italic;color:#000;transform:scaleX(0.8692);">: EGL_TRUE</div>
</div>
<div class="a" style="left:1593px;top:96px;width:15px;height:895px;background:#f0f0f0"></div>
<svg class="a" style="left:1595px;top:101px" width="11" height="8" viewBox="0 0 11 8"><path d="M1.8 6.2L5.5 2.5L9.2 6.2" stroke="#606060" stroke-width="1.8" fill="none"/></svg>
<div class="a" style="left:1593px;top:856px;width:15px;height:18px;background:#cdcdcd"></div>
<svg class="a" style="left:1595px;top:978px" width="11" height="8" viewBox="0 0 11 8"><path d="M1.8 1.8L5.5 5.5L9.2 1.8" stroke="#606060" stroke-width="1.8" fill="none"/></svg>
<div class="a" style="left:1616px;top:73px;width:156px;height:20px;background:#e1e1e1;border:1px solid #adadad;box-sizing:border-box"></div>
<div class="t" style="left:1619.50px;top:78.69px;font-size:11px;color:#000;transform:scaleX(0.9242);">Colour</div>
<svg class="a" style="left:1758.5px;top:80px" width="10" height="6" viewBox="0 0 10 6"><path d="M0.8 0.8L4.9 4.9L9 0.8" stroke="#333" stroke-width="1.1" fill="none"/></svg>
<div class="t" style="left:1974.20px;top:78.69px;font-size:11px;color:#000;transform:scaleX(0.9681);">EGLSurface 0x0073c3d0 (800 x 600)</div>
<div class="a" style="left:2353px;top:73px;width:78px;height:20px;background:#e1e1e1;border:1px solid #adadad;box-sizing:border-box"></div>
<div class="t" style="left:2356.70px;top:78.69px;font-size:11px;color:#000;transform:scaleX(1.0216);">101% (Fit)</div>
<svg class="a" style="left:2417.5px;top:80px" width="10" height="6" viewBox="0 0 10 6"><path d="M0.8 0.8L4.9 4.9L9 0.8" stroke="#333" stroke-width="1.1" fill="none"/></svg>
<div class="a" style="left:1616px;top:94px;width:815px;height:775px;background:#737373"></div>
<div class="a" style="left:1619px;top:178px;width:809px;height:606px;background:#000"></div>
<div class="a" style="left:1764px;top:222px;width:518px;height:518px;background:#fff"></div>
<div class="a" style="left:1625px;top:879px;width:1px;height:5px;background:#9a9a8a"></div>
<div class="a" style="left:1890px;top:879px;width:1px;height:5px;background:#9a9a8a"></div>
<div class="a" style="left:2156px;top:879px;width:1px;height:5px;background:#9a9a8a"></div>
<div class="a" style="left:2421px;top:879px;width:1px;height:5px;background:#9a9a8a"></div>
<div class="a" style="left:1620px;top:891px;width:805px;height:3px;background:#e6e6e6;border:1px solid #d6d6d6;box-sizing:border-box"></div>
<svg class="a" style="left:2416px;top:883px" width="11" height="20" viewBox="0 0 11 20"><path d="M5.5 0.8L11 6V19.8H0V6Z" fill="#0078d7"/></svg>
<div class="a" style="left:1620px;top:910px;width:150px;height:20px;background:#e1e1e1;border:1px solid #adadad;box-sizing:border-box"></div>
<div class="t" style="left:1624.00px;top:915.69px;font-size:11px;color:#000;transform:scaleX(0.9407);">All Surfaces</div>
<svg class="a" style="left:1756.5px;top:917px" width="10" height="6" viewBox="0 0 10 6"><path d="M0.8 0.8L4.9 4.9L9 0.8" stroke="#333" stroke-width="1.1" fill="none"/></svg>
<div class="a" style="left:1772px;top:910px;width:69px;height:20px;background:#e1e1e1;border:1px solid #adadad;box-sizing:border-box"></div>
<div class="t" style="left:1775.50px;top:915.69px;font-size:11px;color:#000;transform:scaleX(0.9722);">316</div>
<svg class="a" style="left:1827.5px;top:917px" width="10" height="6" viewBox="0 0 10 6"><path d="M0.8 0.8L4.9 4.9L9 0.8" stroke="#333" stroke-width="1.1" fill="none"/></svg>
<div class="a" style="left:2330px;top:910px;width:97px;height:20px;background:#e1e1e1;border:1px solid #adadad;box-sizing:border-box"></div>
<div class="t" style="left:2333.40px;top:915.69px;font-size:11px;color:#000;transform:scaleX(0.9625);">Range</div>
<svg class="a" style="left:2413.5px;top:917px" width="10" height="6" viewBox="0 0 10 6"><path d="M0.8 0.8L4.9 4.9L9 0.8" stroke="#333" stroke-width="1.1" fill="none"/></svg>
<div class="a" style="left:1616px;top:936px;width:816px;height:1px;background:#a0a0a0"></div>
<div class="a" style="left:1616px;top:937px;width:816px;height:1px;background:#fff"></div>
<div class="t" style="left:2378.00px;top:946.77px;font-size:11.5px;color:#000;transform:scaleX(0.9082);">4 / 4 calls</div>
<div class="a" style="left:1616px;top:968px;width:816px;height:1px;background:#a0a0a0"></div>
<div class="a" style="left:1614px;top:970px;width:97px;height:22px;background:#fff;border:1px solid #e0e0e0;border-bottom:none;box-sizing:border-box"></div>
<div class="t" style="left:1626.50px;top:976.27px;font-size:11.5px;color:#000;transform:scaleX(0.9231);">Image Analysis</div>
<div class="a" style="left:1711px;top:972px;width:116px;height:18px;background:#f0f0f0;border-top:1px solid #b9b9b9;border-right:1px solid #d9d9d9;border-bottom:1px solid #d9d9d9;box-sizing:border-box"></div>
<div class="t" style="left:1722.75px;top:975.27px;font-size:11.5px;color:#000;transform:scaleX(0.9343);">Object Data Viewer</div>
<div class="a" style="left:1827px;top:972px;width:86px;height:18px;background:#f0f0f0;border-top:1px solid #b9b9b9;border-right:1px solid #d9d9d9;border-bottom:1px solid #d9d9d9;box-sizing:border-box"></div>
<div class="t" style="left:1838.85px;top:975.27px;font-size:11.5px;color:#000;transform:scaleX(0.9299);">Modifications</div>
<div class="a" style="left:1913px;top:972px;width:100px;height:18px;background:#f0f0f0;border-top:1px solid #b9b9b9;border-right:1px solid #d9d9d9;border-bottom:1px solid #d9d9d9;box-sizing:border-box"></div>
<div class="t" style="left:1925.10px;top:975.27px;font-size:11.5px;color:#000;transform:scaleX(0.9133);">Shader Analysis</div>
<div class="a" style="left:2013px;top:972px;width:130px;height:18px;background:#f0f0f0;border-top:1px solid #b9b9b9;border-right:1px solid #d9d9d9;border-bottom:1px solid #d9d9d9;box-sizing:border-box"></div>
<div class="t" style="left:2023.70px;top:975.27px;font-size:11.5px;color:#000;transform:scaleX(0.9362);">Recorded Framebuffer</div>
<div class="a" style="left:2143px;top:971px;width:273px;height:1px;background:#b9b9b9"></div>
<div class="t" style="left:2066.00px;top:999.84px;font-size:12px;color:#000;transform:scaleX(0.9520);">Frame 0 / 176</div>
<div class="a" style="left:2158px;top:996px;width:1px;height:20px;background:#d9d9d9"></div>
<div class="a" style="left:2163px;top:997px;width:252px;height:1px;background:#fbfbfb"></div>
<div class="a" style="left:2415px;top:997px;width:1px;height:19px;background:#e0e0e0"></div>
<svg class="a" style="left:2167px;top:1001px" width="6" height="9" viewBox="0 0 6 9"><path d="M5 0.5L1 4.5L5 8.5" stroke="#333" stroke-width="1.2" fill="none"/></svg>
<div class="a" style="left:2180px;top:998px;width:18px;height:15px;background:#cdcdcd"></div>
<svg class="a" style="left:2402px;top:1001px" width="6" height="9" viewBox="0 0 6 9"><path d="M1 0.5L5 4.5L1 8.5" stroke="#333" stroke-width="1.2" fill="none"/></svg>
<div class="a" style="left:1px;top:1017px;width:2432px;height:1px;background:#b0b0b0"></div>
<div class="a" style="left:2428px;top:1013px;width:2px;height:2px;background:#b8b8b8"></div>
<div class="a" style="left:2425px;top:1013px;width:2px;height:2px;background:#b8b8b8"></div>
<div class="a" style="left:2428px;top:1010px;width:2px;height:2px;background:#b8b8b8"></div>
<div class="a" style="left:2422px;top:1013px;width:2px;height:2px;background:#b8b8b8"></div>
<div class="a" style="left:2425px;top:1010px;width:2px;height:2px;background:#b8b8b8"></div>
<div class="a" style="left:2428px;top:1007px;width:2px;height:2px;background:#b8b8b8"></div>
</body></html>
